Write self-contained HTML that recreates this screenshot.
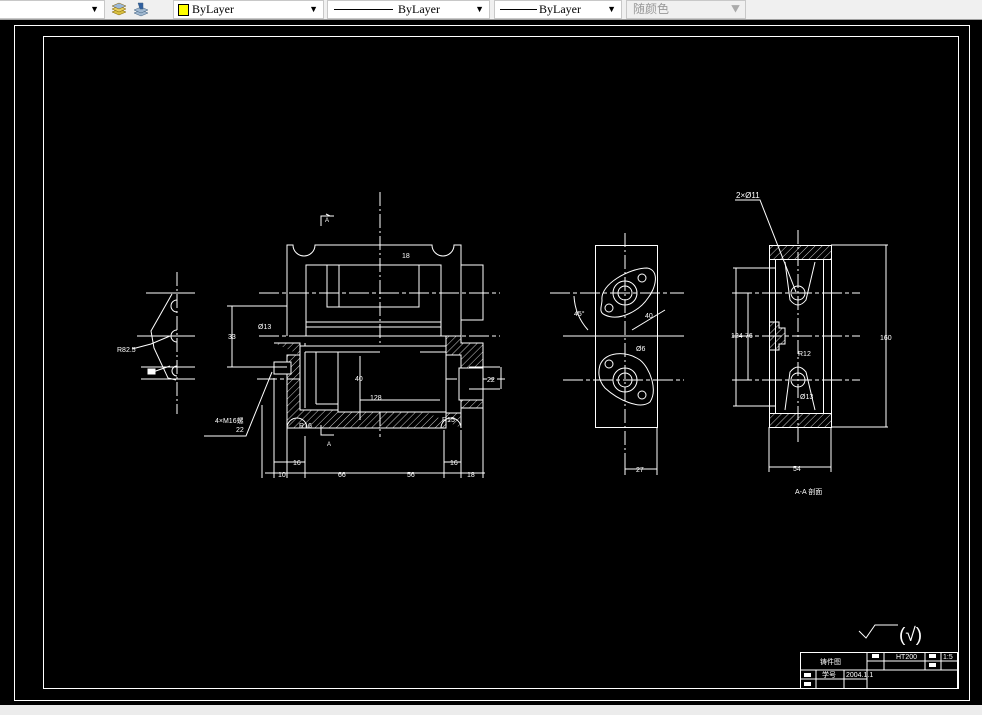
<!DOCTYPE html>
<html><head><meta charset="utf-8"><style>
body{margin:0;width:982px;height:715px;overflow:hidden;background:#000;font-family:"Liberation Sans","Noto Sans CJK SC",sans-serif}
#tb{position:absolute;left:0;top:0;width:982px;height:19px;background:#f0f0f0;border-bottom:1px solid #a0a0a0}
.cb{position:absolute;top:0;height:17px;background:#fff;border:1px solid #c8c8c8;font-family:"Liberation Serif",serif;font-size:12px;line-height:16px}
.ar{position:absolute;right:5px;top:0;font-size:9px}
#bot{position:absolute;left:0;top:705px;width:982px;height:10px;background:#ececec}
</style></head><body>
<div id="tb">
<div class="cb" style="left:-2px;width:106px;border-left:none"><span class="ar">▼</span></div>
<svg style="position:absolute;left:108px;top:0" width="45" height="18"><g fill="#d8c040" stroke="#806000" stroke-width=".5"><path d="M4 12l7-3 7 3-7 3z"/><path d="M4 9l7-3 7 3-7 3z" fill="#e8d060"/><path d="M4 6l7-3 7 3-7 3z" fill="#9cb8d8"/></g><g fill="#a0b8d0" stroke="#406080" stroke-width=".5"><path d="M26 13l7-3 7 3-7 3z"/><path d="M26 10l7-3 7 3-7 3z"/><path d="M30 3l5 0 0 6-3 0z" fill="#3060a0"/></g></svg>
<div class="cb" style="left:173px;width:149px"><span style="position:absolute;left:4px;top:3px;width:9px;height:10px;background:#ffff00;border:1px solid #000"></span><span style="position:absolute;left:18px">ByLayer</span><span class="ar">▼</span></div>
<div class="cb" style="left:327px;width:161px"><span style="position:absolute;left:6px;top:8px;width:59px;border-top:1px solid #000"></span><span style="position:absolute;left:70px">ByLayer</span><span class="ar">▼</span></div>
<div class="cb" style="left:494px;width:126px"><span style="position:absolute;left:5px;top:8px;width:37px;border-top:1px solid #000"></span><span style="position:absolute;left:44px">ByLayer</span><span class="ar">▼</span></div>
<div class="cb" style="left:626px;width:118px;background:#f0f0f0;color:#999;font-family:'Noto Sans CJK SC',sans-serif;font-size:12px"><span style="position:absolute;left:6px">随颜色</span><span class="ar" style="color:#aaa">▼</span></div>
</div>
<svg style="position:absolute;left:0;top:0" width="982" height="715" fill="none" stroke="#fff" stroke-width="1">
<defs><pattern id="h" width="5" height="5" patternUnits="userSpaceOnUse" patternTransform="rotate(45)"><line x1="0" y1="0" x2="0" y2="5" stroke="#fff" stroke-width=".8"/></pattern></defs>
<rect x="14.5" y="25.5" width="955" height="675"/>
<rect x="43.5" y="36.5" width="915" height="652"/>
<!-- left view -->
<g>
<line x1="177" y1="272" x2="177" y2="414" stroke-dasharray="14 3 2 3"/>
<line x1="146" y1="293" x2="195" y2="293"/><line x1="137" y1="336" x2="195" y2="336"/>
<line x1="141" y1="367" x2="195" y2="367"/><line x1="141" y1="379" x2="195" y2="379"/>
<path d="M172 294L151 331L154 348L168 378L176 380"/>
<path d="M177 300a6 6 0 0 0 0 12"/><path d="M177 330a6 6 0 0 0 0 12"/><path d="M177 366a5 5 0 0 0 0 10"/>
<path d="M132 349L151 344L170 336"/><path d="M150 373L170 366"/>
<rect x="148" y="369" width="7" height="5" fill="#fff"/>
<text x="117" y="352" fill="#fff" stroke="none" font-size="7">R82.5</text>
</g>
<!-- main view -->
<g>
<line x1="380" y1="192" x2="380" y2="437" stroke-dasharray="14 3 2 3"/>
<path d="M321 226v-10h13M330 216l-4 -2"/><path d="M321 425v10h13"/>
<text x="325" y="222" fill="#fff" stroke="none" font-size="6">A</text>
<text x="327" y="446" fill="#fff" stroke="none" font-size="6">A</text>
<path d="M287 336V245h6a11 11 0 0 0 22 0h117a11 11 0 0 0 22 0h7v91"/>
<rect x="306" y="265" width="135" height="71"/>
<rect x="461" y="265" width="22" height="55"/>
<line x1="306" y1="327" x2="441" y2="327"/><line x1="306" y1="322" x2="441" y2="322"/>
<path d="M327 265v42h12v-42M339 307h80v-42"/>
<line x1="259" y1="293" x2="500" y2="293" stroke-dasharray="20 3 4 3"/>
<line x1="259" y1="336" x2="500" y2="336" stroke-dasharray="20 3 4 3"/>
<line x1="257" y1="379" x2="505" y2="379" stroke-dasharray="20 3 4 3"/>
<path d="M274 343H300V355H287V428H446V413H461V355H446V336H461V343H483V408H461V428" fill="url(#h)"/>
<path d="M300 343V410H338V412H446V346H305V343" fill="#000"/>
<path d="M300 346H446M305 352H380M420 352H446M305 352V408M316 352V404M338 352V412M316 404H338M338 412H445"/>
<rect x="274" y="362" width="17" height="12" fill="#000"/>
<rect x="459" y="368" width="24" height="32" fill="#000"/>
<path d="M287 428a10 10 0 0 1 20 0M441 428a10 10 0 0 1 20 0"/>
<line x1="262" y1="405" x2="262" y2="478"/><line x1="274" y1="378" x2="274" y2="478"/>
<line x1="287" y1="428" x2="287" y2="478"/><line x1="305" y1="436" x2="305" y2="478"/>
<line x1="444" y1="430" x2="444" y2="478"/><line x1="461" y1="430" x2="461" y2="478"/>
<line x1="483" y1="408" x2="483" y2="478"/>
<line x1="265" y1="473" x2="485" y2="473"/><line x1="274" y1="462" x2="305" y2="462"/><line x1="444" y1="462" x2="461" y2="462"/>
<line x1="227" y1="306" x2="287" y2="306"/><line x1="227" y1="367" x2="287" y2="367"/><line x1="232" y1="306" x2="232" y2="367"/>
<line x1="469" y1="367" x2="500" y2="367"/><line x1="469" y1="389" x2="500" y2="389"/><line x1="501" y1="367" x2="501" y2="389"/>
<line x1="360" y1="356" x2="360" y2="420"/><line x1="440" y1="400" x2="360" y2="400"/>
<path d="M204 436H246L272 372"/>
<g fill="#fff" stroke="none" font-size="7">
<text x="215" y="423">4×M16螺</text><text x="236" y="432">22</text>
<text x="278" y="477">10</text><text x="293" y="465">16</text><text x="338" y="477">66</text><text x="407" y="477">56</text><text x="450" y="465">16</text><text x="467" y="477">18</text>
<text x="402" y="258">18</text><text x="228" y="339">33</text><text x="258" y="329">Ø13</text><text x="370" y="400">128</text><text x="355" y="381">40</text>
<text x="487" y="382">22</text><text x="442" y="422">R15</text><text x="299" y="428">R16</text>
</g></g>
<!-- view 2 -->
<g>
<rect x="595.5" y="245.5" width="62" height="182"/>
<line x1="625" y1="233" x2="625" y2="470" stroke-dasharray="14 3 2 3"/>
<line x1="550" y1="293" x2="684" y2="293" stroke-dasharray="20 3 4 3"/>
<line x1="563" y1="336" x2="684" y2="336"/>
<line x1="563" y1="380" x2="684" y2="380" stroke-dasharray="20 3 4 3"/>
<path d="M602 300C600 284 630 268 647 268C660 270 656 288 648 298C640 310 620 322 605 315C598 312 602 306 602 300Z"/>
<circle cx="625" cy="293" r="12"/><circle cx="625" cy="293" r="7"/><circle cx="642" cy="278" r="4"/><circle cx="609" cy="308" r="4"/>
<path d="M600 365C605 352 625 350 640 360C650 368 658 390 650 402C640 410 618 400 605 388C598 380 598 372 600 365Z"/>
<circle cx="625" cy="380" r="12"/><circle cx="625" cy="380" r="7"/><circle cx="642" cy="395" r="4"/><circle cx="609" cy="364" r="4"/>
<line x1="625" y1="460" x2="625" y2="475"/><line x1="657" y1="427" x2="657" y2="475"/><line x1="625" y1="469" x2="657" y2="469"/>
<path d="M574 296a55 55 0 0 0 14 34"/><path d="M632 330l33 -20"/>
<g fill="#fff" stroke="none" font-size="7"><text x="574" y="316">45°</text><text x="645" y="318">40</text><text x="636" y="351">Ø6</text><text x="636" y="472">27</text></g>
</g>
<!-- view 3 -->
<g>
<rect x="769.5" y="245.5" width="62" height="182"/>
<rect x="769.5" y="245.5" width="62" height="14" fill="url(#h)"/>
<rect x="769.5" y="413.5" width="62" height="14" fill="url(#h)"/>
<rect x="775.5" y="259.5" width="48" height="154" fill="#000"/>
<path d="M769 322h10v6h6v16h-6v6h-10" fill="url(#h)"/>
<line x1="798" y1="230" x2="798" y2="443" stroke-dasharray="14 3 2 3"/>
<line x1="732" y1="293" x2="860" y2="293" stroke-dasharray="20 3 4 3"/>
<line x1="732" y1="336" x2="860" y2="336" stroke-dasharray="20 3 4 3"/>
<line x1="732" y1="380" x2="860" y2="380" stroke-dasharray="20 3 4 3"/>
<circle cx="798" cy="293" r="7"/><circle cx="798" cy="380" r="7"/>
<path d="M785 262L790 300Q798 310 806 300L815 262"/><path d="M785 410L790 372Q798 362 806 372L815 410"/>
<line x1="831" y1="245" x2="888" y2="245"/><line x1="831" y1="427" x2="888" y2="427"/><line x1="886" y1="245" x2="886" y2="427"/>
<line x1="733" y1="268" x2="775" y2="268"/><line x1="733" y1="406" x2="775" y2="406"/><line x1="736" y1="268" x2="736" y2="406"/><line x1="748" y1="293" x2="748" y2="380"/>
<line x1="769" y1="427" x2="769" y2="472"/><line x1="831" y1="427" x2="831" y2="472"/><line x1="769" y1="467" x2="831" y2="467"/>
<path d="M735 200H760L796 292"/>
<g fill="#fff" stroke="none" font-size="7"><text x="736" y="198" font-size="8">2×Ø11</text><text x="793" y="471">54</text><text x="880" y="340">160</text><text x="731" y="338">124</text><text x="745" y="338">76</text>
<text x="795" y="494">A-A 剖面</text><text x="798" y="356">R12</text><text x="800" y="399">Ø13</text></g>
</g>
<!-- roughness -->
<path d="M859 631l7 7 9-13h23"/>
<text x="899" y="641" fill="#fff" stroke="none" font-size="19" font-family="Liberation Sans">(√)</text>
<!-- title block -->
<g>
<rect x="800.5" y="652.5" width="157" height="36"/>
<line x1="867" y1="652" x2="867" y2="688"/><line x1="884" y1="652" x2="884" y2="670"/><line x1="925" y1="652" x2="925" y2="670"/><line x1="941" y1="652" x2="941" y2="670"/>
<line x1="867" y1="661" x2="958" y2="661"/><line x1="800" y1="670" x2="958" y2="670"/><line x1="800" y1="679" x2="867" y2="679"/>
<line x1="816" y1="670" x2="816" y2="688"/><line x1="844" y1="670" x2="844" y2="688"/>
<g fill="#fff" stroke="none" font-size="7"><text x="820" y="664">铸件图</text><text x="896" y="659">HT200</text><text x="943" y="659">1:5</text><text x="822" y="677">学号</text><text x="846" y="677">2004.1.1</text></g>
<g fill="#fff" stroke="none"><rect x="872" y="654" width="7" height="4"/><rect x="929" y="654" width="7" height="4"/><rect x="929" y="663" width="7" height="4"/><rect x="804" y="673" width="7" height="4"/><rect x="804" y="682" width="7" height="4"/></g>
</g>
</svg>
<div id="bot"></div>
</body></html>
